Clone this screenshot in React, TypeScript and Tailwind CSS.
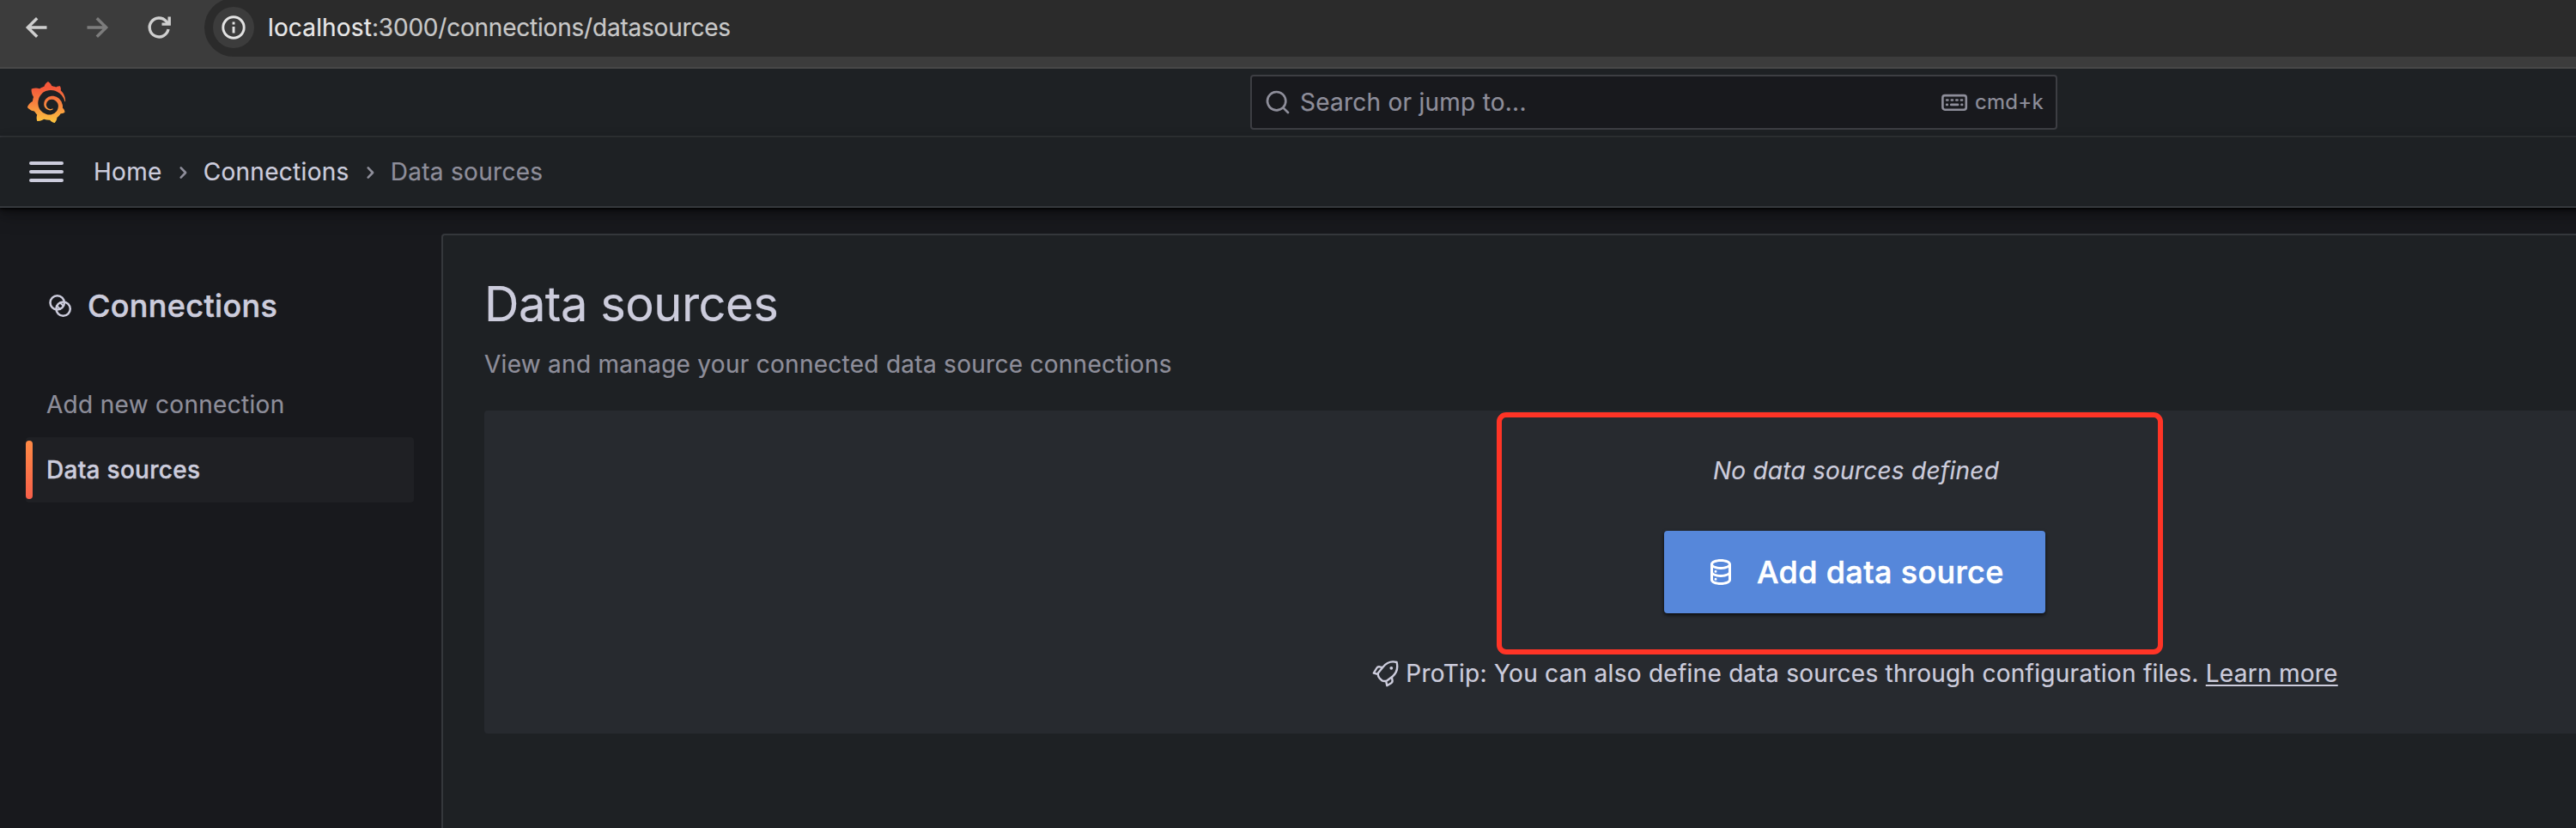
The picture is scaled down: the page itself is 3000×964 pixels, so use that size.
import type { ReactNode } from "react";
import { SiGrafana } from "react-icons/si";

function BrowserBar() {
  return (
    <div className="flex h-20 shrink-0 items-start border-b-2 border-[#484848] bg-[#3c3c3c]">
      <div className="flex h-16 w-[238px] shrink-0 items-center pl-[26px]">
        <svg className="h-8 w-8" viewBox="0 0 32 32" fill="none" stroke="#cfcfcf" strokeWidth="3.4">
          <path d="M28.5 16H6.5M17.2 5.2L6.3 16l10.9 10.8" />
        </svg>
        <svg className="ml-[39px] h-8 w-8" viewBox="0 0 32 32" fill="none" stroke="#7c7c7c" strokeWidth="3.4">
          <path d="M4.5 16h22M15.8 5.2L26.7 16 15.8 26.8" />
        </svg>
        <svg className="ml-[39px] h-8 w-8" viewBox="0 0 32 32" fill="none" stroke="#cfcfcf" strokeWidth="3.4">
          <path d="M28 18a11 11 0 1 1-2.6-9.4l3 3.2" />
          <path d="M30.9 3.5v10.2H20.5v-3.2h7V3.5z" fill="#cfcfcf" stroke="none" />
        </svg>
      </div>
      <div className="-mt-0.5 flex h-[68px] grow items-center rounded-l-full bg-[#2b2b2b] pl-2.5">
        <div className="flex h-12 w-12 items-center justify-center rounded-full bg-[#3c3c3c]">
          <svg className="h-7 w-7" viewBox="0 0 28 28">
            <circle cx="14" cy="14" r="12.2" fill="none" stroke="#e3e3e3" strokeWidth="2.9" />
            <path d="M12.6 12.9h2.9v7.6h-2.9zM12.6 7.6h2.9v2.9h-2.9z" fill="#e3e3e3" />
          </svg>
        </div>
        <div className="ml-4 text-[28px] leading-none text-[#c8c8c8]">
          <span className="tracking-[0.15px] text-[#e8e8e8]">localhost</span>
          <span className="tracking-[-0.21px]">:3000/connections/datasources</span>
        </div>
      </div>
    </div>
  );
}

function TopBar() {
  return (
    <div className="flex h-20 shrink-0 items-center border-b-2 border-[#35383c] bg-[#1e2124]">
      <svg className="h-0 w-0">
        <defs>
          <linearGradient id="logo" x1="0" y1="0" x2="0" y2="1">
            <stop offset="0.15" stopColor="#f4583a" />
            <stop offset="0.55" stopColor="#f8853f" />
            <stop offset="1" stopColor="#fcc63f" />
          </linearGradient>
        </defs>
      </svg>
      <div className="flex w-[1456px] shrink-0 pl-[30px]">
        <SiGrafana className="h-12 w-12 fill-[url(#logo)]" />
      </div>
      <div className="flex h-16 w-[940px] shrink-0 items-center rounded-[4px] border-2 border-[#3d3e43] bg-[#18191d] pr-3.5 pl-3.5 text-[#8e8e9a]">
        <svg className="h-8 w-8" viewBox="0 0 24 24" fill="currentColor">
          <path d="M21.71,20.29,18,16.61A9,9,0,1,0,16.61,18l3.68,3.68a1,1,0,0,0,1.42,0A1,1,0,0,0,21.71,20.29ZM11,18a7,7,0,1,1,7-7A7,7,0,0,1,11,18Z" />
        </svg>
        <span className="ml-2.5 text-[28px] tracking-[0.25px]">Search or jump to...</span>
        <svg className="mr-2 ml-auto h-8 w-8" viewBox="0 0 32 32" fill="none" stroke="currentColor">
          <rect x="2.4" y="8.1" width="27.4" height="16.6" rx="2.6" strokeWidth="2.6" />
          <path d="M7.2 13.5h1.2M12.8 13.5h1.2M18.4 13.5h1.2M23.9 13.5h1.2M7.2 18.9h.6M24.5 18.9h.6M12.3 18.9h7.8" strokeWidth="2.7" strokeLinecap="round" />
        </svg>
        <span className="text-2xl tracking-[0.3px]">cmd+k</span>
      </div>
    </div>
  );
}

function Chevron() {
  return (
    <svg className="mx-2 h-8 w-8" viewBox="0 0 32 32" fill="none" stroke="#8e8e9a" strokeWidth="2.6" strokeLinecap="round" strokeLinejoin="round">
      <path d="M13.7 11.4L19.1 17l-5.4 5.6" />
    </svg>
  );
}

function Breadcrumbs() {
  return (
    <div className="z-10 flex h-[82px] shrink-0 items-center border-b-2 border-[#35383c] bg-[#1e2124] pl-[34px] text-[28px] tracking-[0.3px] shadow-[0_1px_3px_#000,0_4px_8px_rgba(0,0,0,0.4),0_10px_20px_rgba(0,0,0,0.23)]">
      <div className="mr-[35px] flex w-10 flex-col gap-1.5">
        <span className="h-1 rounded-full bg-[#ccccdc]" />
        <span className="h-1 rounded-full bg-[#ccccdc]" />
        <span className="h-1 rounded-full bg-[#ccccdc]" />
      </div>
      <span>Home</span>
      <Chevron />
      <span>Connections</span>
      <Chevron />
      <span className="text-[#8e8e9a]">Data sources</span>
    </div>
  );
}

function NavItem({ active, children }: { active?: boolean; children: ReactNode }) {
  return active ? (
    <div className="flex h-[76px] items-center rounded-[4px] bg-[#1f2024] text-[28px] font-medium tracking-[0.28px] [-webkit-text-stroke:0.4px]">
      <span className="mr-4 h-[68px] w-2 rounded-full bg-linear-to-b from-[#ff8a45] to-[#f75f4a]" />
      {children}
    </div>
  ) : (
    <div className="flex h-[76px] items-center pl-6 text-[28px] tracking-[0.3px] text-[#8e8e9a]">{children}</div>
  );
}

function Sidebar() {
  return (
    <div className="w-[514px] shrink-0 pt-[82px] pr-8 pl-[30px]">
      <div className="mb-[45px] flex h-16 items-center pl-6">
        <svg className="h-8 w-8" viewBox="4 4 32 32" fill="none" stroke="#ccccdc" strokeWidth="2.5">
          <circle cx="16.7" cy="16.4" r="8.2" />
          <circle cx="23.6" cy="23.6" r="8.2" />
          <path d="M19.4 15.8l5 5M15.6 19.4l5 5" strokeWidth="2" />
        </svg>
        <span className="ml-4 text-4xl font-medium tracking-[0.35px] [-webkit-text-stroke:0.5px]">Connections</span>
      </div>
      <NavItem>Add new connection</NavItem>
      <NavItem active>Data sources</NavItem>
    </div>
  );
}

function Rocket() {
  return (
    <svg className="h-8 w-8" viewBox="4 6 32 32" fill="none" stroke="#ccccdc" strokeWidth="2.4" strokeLinejoin="round">
      <path d="M33.6 9C27 7.2 21.5 9.7 17.5 14.7L12 21.5C11.3 24 12.3 26 13.6 27.6L16.5 30.4C19 31.6 21 31 22.5 30.2L28.5 25.8C33.5 21.5 35.2 15.5 33.6 9Z" />
      <path d="M17.3 15.2L13.5 14.3Q11.4 14 10.2 16L6.8 21.7L12.2 23" />
      <path d="M21.2 31L22.3 36.2L27.2 33.2Q29 32 28.5 29.8L27.8 26.5" />
      <circle cx="27.3" cy="15.8" r="1.9" fill="#ccccdc" stroke="none" />
    </svg>
  );
}

function EmptyState() {
  return (
    <div className="relative flex h-[376px] flex-col items-center rounded-[4px] bg-[#272a2f] pt-12 text-[28px] tracking-[0.27px]">
      <div className="flex h-11 items-center pl-[3px] tracking-[0.25px] italic">No data sources defined</div>
      <div className="mt-12 flex h-24 w-[444px] items-center rounded-[4px] bg-[#5687da] pl-12 text-4xl font-medium tracking-[0.35px] text-white shadow-[0_2px_4px_rgba(0,0,0,0.75)]">
        <svg className="mr-6 h-9 w-9" viewBox="0 0 24 24" fill="currentColor">
          <path d="M8,16.5a1,1,0,1,0,1,1A1,1,0,0,0,8,16.5ZM12,2C8,2,4,3.37,4,6V18c0,2.63,4,4,8,4s8-1.37,8-4V6C20,3.37,16,2,12,2Zm6,16c0,.71-2.28,2-6,2s-6-1.29-6-2V14.73A13.16,13.16,0,0,0,12,16a13.16,13.16,0,0,0,6-1.27Zm0-6c0,.71-2.28,2-6,2s-6-1.29-6-2V8.73A13.16,13.16,0,0,0,12,10a13.16,13.16,0,0,0,6-1.27ZM12,8C8.28,8,6,6.71,6,6s2.28-2,6-2,6,1.29,6,2S15.72,8,12,8ZM8,10.5a1,1,0,1,0,1,1A1,1,0,0,0,8,10.5Z" />
        </svg>
        <span className="[-webkit-text-stroke:0.5px]">Add data source</span>
      </div>
      <div className="mt-12 flex h-11 items-center whitespace-pre">
        <Rocket />
        <span className="ml-2">
          ProTip: You can also define data sources through configuration files.{" "}
          <span className="underline decoration-2 underline-offset-[3px]">Learn more</span>
        </span>
      </div>
      <div className="absolute top-[2px] left-[1178.5px] h-[282px] w-[776.5px] rounded-[11px] border-[6px] border-[#ff3426]" />
    </div>
  );
}

export default function App() {
  return (
    <div className="h-[964px] w-full overflow-hidden bg-[#18191d] font-[Inter,sans-serif] text-[#ccccdc] [-webkit-text-stroke:0.2px]">
      <div className="flex h-full w-[3852px] flex-col">
        <BrowserBar />
        <TopBar />
        <Breadcrumbs />
        <div className="flex grow">
          <Sidebar />
          <div className="mt-[30px] grow rounded-tl-[4px] border-t-2 border-l-2 border-[#35383c] bg-[#1e2124] pr-24 pl-12">
            <h1 className="mt-[48px] text-[56px] leading-[64px] tracking-[-0.5px]">Data sources</h1>
            <p className="mt-[16px] mb-[32px] text-[28px] leading-[44px] tracking-[0.28px] text-[#8e8e9a]">
              View and manage your connected data source connections
            </p>
            <EmptyState />
          </div>
        </div>
      </div>
    </div>
  );
}
